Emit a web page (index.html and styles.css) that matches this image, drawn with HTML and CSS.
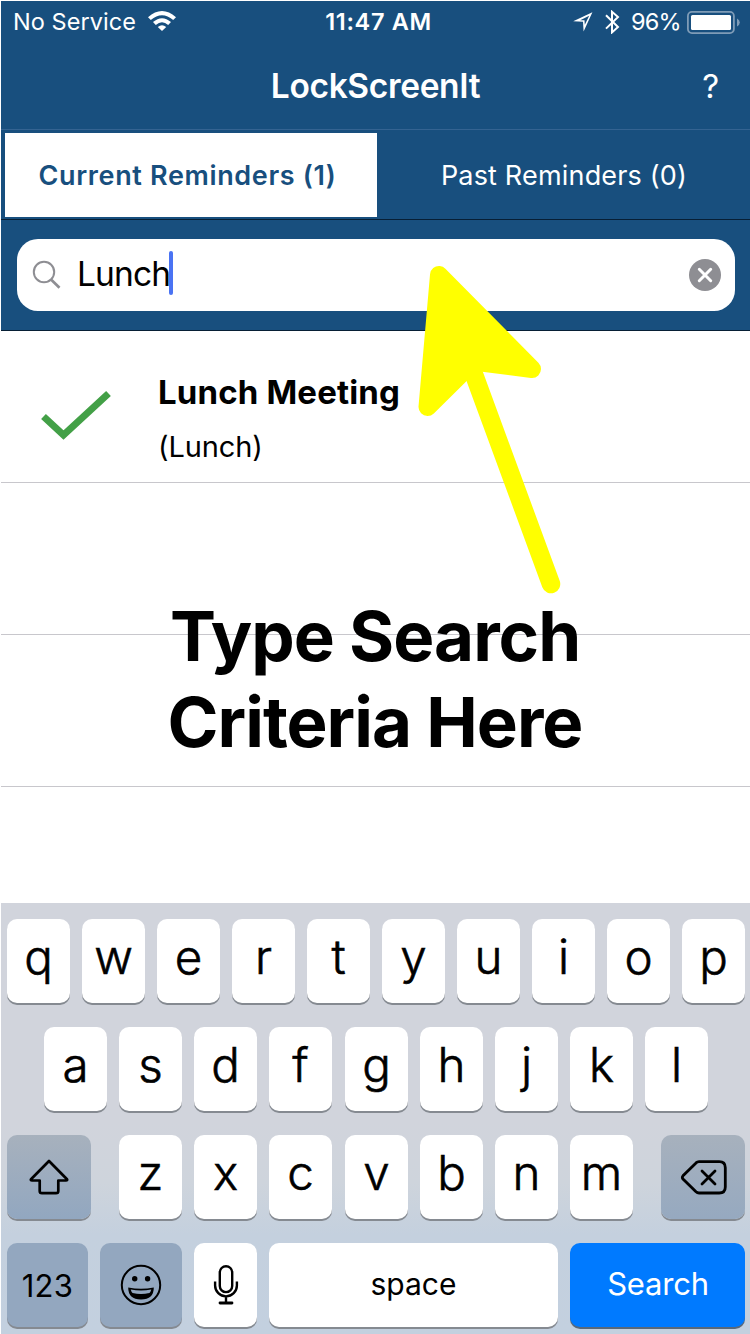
FILE: index.html
```html
<!DOCTYPE html>
<html lang="en">
<head>
<meta charset="utf-8">
<title>LockScreenIt</title>
<link rel="stylesheet" href="styles.css">
</head>
<body>
<main class="screen">
  <header class="header">
    <div class="status">
      <div class="status-left">
        <span class="carrier">No Service</span>
        <svg class="wifi" width="28" height="20" viewBox="0 0 28 20"><path d="M0 6.2Q14-6.2 28 6.2L25.2 9Q14-.6 2.8 9ZM5 11.1Q14 3.2 23 11.1L20.2 13.9Q14 8.7 7.8 13.9ZM9.8 15.9Q14 12.4 18.2 15.9L14 20Z" fill="#fff"/></svg>
      </div>
      <span class="clock">11:47 AM</span>
      <div class="status-right">
        <svg class="locate" width="20" height="20" viewBox="0 0 20 20"><path fill-rule="evenodd" d="M.2 9.2 19.4.3 10.6 19.5 10 9.7ZM7.2 8.2H11.5L11.8 12.8 16.2 3.7Z" fill="#fff"/></svg>
        <svg class="bluetooth" width="15" height="24" viewBox="0 0 15 24"><path d="M1 5.2 13 17 7 22.4V1.8L13 7 1 18.6" fill="none" stroke="#fff" stroke-width="2"/></svg>
        <span class="percent">96%</span>
        <svg class="battery" width="53" height="23" viewBox="0 0 53 23"><rect x=".9" y=".9" width="46" height="21.2" rx="4" fill="none" stroke="#7f9cb7" stroke-width="1.8"/><rect x="4" y="4" width="40" height="15" rx="1.5" fill="#fff"/><path d="M50 7.5Q52.8 9 52.8 11.5T50 15.5Z" fill="#7f9cb7"/></svg>
      </div>
    </div>
    <nav class="nav"><h1 class="title">LockScreenIt</h1><span class="help">?</span></nav>
    <div class="tabs">
      <div class="tab active"><span class="tab-current">Current Reminders (1)</span></div>
      <div class="tab"><span class="tab-past">Past Reminders (0)</span></div>
    </div>
    <div class="search-bar">
      <div class="field">
        <svg class="lens" width="30" height="30" viewBox="0 0 30 30" fill="none" stroke="#8e8e93"><circle cx="12" cy="12" r="10.2" stroke-width="2"/><path d="m19 19.5 8.5 8.3" stroke-width="2.7"/></svg>
        <span class="query">Lunch</span><i class="caret"></i>
        <svg class="clear" width="32" height="32" viewBox="0 0 32 32"><circle cx="16" cy="16" r="16" fill="#8e8e93"/><path d="m10.3 10.3 11.4 11.4m0-11.4L10.3 21.7" stroke="#fff" stroke-width="3" stroke-linecap="round"/></svg>
      </div>
    </div>
  </header>
  <section class="list">
    <div class="row">
      <svg class="check" width="70" height="50" viewBox="0 0 70 50"><path d="M2.5 26.5 22.5 45 67.5 3.5" fill="none" stroke="#43a047" stroke-width="7"/></svg>
      <div class="reminder"><strong class="name">Lunch Meeting</strong><span class="note">(Lunch)</span></div>
    </div>
    <div class="row"></div>
    <div class="row"></div>
  </section>
  <section class="keyboard">
    <div class="keys row-one"><b>q</b><b>w</b><b>e</b><b>r</b><b>t</b><b>y</b><b>u</b><b>i</b><b>o</b><b>p</b></div>
    <div class="keys row-two"><b>a</b><b>s</b><b>d</b><b>f</b><b class="mid">g</b><b>h</b><b>j</b><b>k</b><b>l</b></div>
    <div class="keys row-three">
      <b class="dim shift"><svg width="40" height="36" viewBox="0 0 40 36"><path d="M20 2 38 20.3Q38.7 21.5 37 21.5H29.3V32Q29.3 34.2 27 34.2H13Q10.7 34.2 10.7 32V21.5H3Q1.3 21.5 2 20.3Z" fill="none" stroke="#000" stroke-width="2.7" stroke-linejoin="round"/></svg></b>
      <b>z</b><b>x</b><b>c</b><b class="mid">v</b><b>b</b><b>n</b><b>m</b>
      <b class="dim delete"><svg width="47" height="35" viewBox="0 0 47 35" fill="none" stroke="#000" stroke-width="2.8"><path d="M19 1.7H39.2Q45.3 1.7 45.3 7.7V27Q45.3 33 39.2 33H19Q17.3 33 16 31.8L3 19Q1.7 17.4 3 15.8L16 2.9Q17.3 1.7 19 1.7Z"/><path d="m22 11 13 13m0-13L22 24" stroke-linecap="round"/></svg></b>
    </div>
    <div class="keys row-four">
      <b class="dim numbers">123</b>
      <b class="dim emoji"><svg width="42" height="42" viewBox="0 0 42 42"><circle cx="21" cy="21" r="19.2" fill="none" stroke="#000" stroke-width="2"/><circle cx="14.7" cy="14.8" r="2.7"/><circle cx="27.6" cy="14.8" r="2.7"/><path d="M8.2 23.5Q21 26 33.8 23.5 33.8 35.5 21 35.5T8.2 23.5Z"/><path d="M10.7 25.6Q21 27.6 31.3 25.6 30.7 28 29.4 29 21 31 12.6 29 11.3 28 10.7 25.6Z" fill="#93a7bf"/></svg></b>
      <b class="mic"><svg width="26" height="40" viewBox="0 0 26 40" fill="none" stroke="#000" stroke-width="2.4"><rect x="6.8" y="1.2" width="12.4" height="25.9" rx="6.2"/><path d="M2.1 16.5V20.5A10.9 10.9 0 0 0 23.9 20.5V16.5M13 31.5V38"/><path d="M7 38h12" stroke-width="2.8" stroke-linecap="round"/></svg></b>
      <b class="space"><span class="space-label">space</span></b><b class="go"><span class="go-label">Search</span></b>
    </div>
  </section>
  <div class="hint">Type Search<br><span class="hint-second">Criteria Here</span></div>
  <svg class="pointer" width="150" height="332" viewBox="415 263 150 332" fill="#ff0" stroke="#ff0" stroke-linecap="round" stroke-linejoin="round"><path d="M439 275 532 369 473.5 361.5 427.5 407Z" stroke-width="18"/><path d="M465 350 551 584" stroke-width="18.5"/></svg>
</main>
</body>
</html>
```
FILE: styles.css
```css
* { box-sizing: border-box; }
body { margin: 0; background: #fff; font-family: Inter, "Liberation Sans", sans-serif; }
svg { display: block; flex: none; }
.screen { position: relative; width: 750px; height: 1334px; padding: 1px 0 0 1px; overflow: hidden; color: #000; }
.header { height: 330px; background: #184f7e; color: #fff; border-bottom: 1px solid #071f35; }
.status { display: grid; grid-template-columns: 1fr auto 1fr; height: 42px; padding: 0 10px 0 12px; align-items: center; font-size: 23.5px; line-height: 42px; }
.status-left, .status-right { display: flex; align-items: center; }
.status-right { justify-content: flex-end; }
.wifi { margin-left: 12px; margin-bottom: 2px; }
.carrier { letter-spacing: .05px; }
.clock { font-weight: 600; letter-spacing: .65px; padding-left: 4px; }
.bluetooth { margin: 0 11px 0 12px; }
.percent { letter-spacing: -.7px; margin-right: 6px; }
.nav { display: grid; grid-template-columns: 1fr auto 1fr; height: 87px; padding: 0 31px 1px; align-items: center; border-bottom: 1px solid #346391; }
.title { grid-column: 2; margin: 0; font-size: 33.5px; line-height: 40px; font-weight: 600; letter-spacing: -.35px; }
.help { justify-self: end; font-size: 33px; line-height: 40px; }
.tabs { display: flex; height: 90px; padding: 3px 1px 2px 4px; border-bottom: 1px solid #071f35; }
.tab { flex: 0 0 372px; display: flex; align-items: center; justify-content: center; padding-left: 2px; padding-top: 1px; font-size: 27px; line-height: 83px; white-space: nowrap; letter-spacing: .18px; }
.active { padding: 1px 7px 0 0; background: #fff; color: #184f7e; font-weight: 600; letter-spacing: .64px; }
.search-bar { height: 110px; padding: 19px 15px 19px 16px; }
.field { display: flex; align-items: center; height: 72px; padding: 0 14px 0 15px; background: #fff; border-radius: 21px; color: #000; }
.query { margin-left: 15px; margin-bottom: 3px; font-size: 33.5px; line-height: 68px; letter-spacing: -.85px; }
.caret { width: 4px; height: 44px; margin-left: -1px; margin-bottom: 4px; border-radius: 2px; background: #4a73f3; }
.clear { margin-left: auto; }
.list { height: 572px; }
.row { display: flex; height: 152px; border-bottom: 1px solid #c8c7cc; }
.check { margin: 59px 47px 0 40px; }
.reminder { display: flex; flex-direction: column; padding-top: 41px; }
.name { font-size: 33px; line-height: 40px; font-weight: 700; letter-spacing: .15px; }
.note { margin-top: 17px; font-size: 29px; line-height: 36px; letter-spacing: -.1px; }
.keyboard { display: flex; flex-direction: column; gap: 24px; height: 431px; padding: 16px 5px 0 6px; background: linear-gradient(#d1d4dc 0 51%, #ced4dc 65%, #c4d0de 77%, #c3d0df); }
.keys { display: flex; gap: 12px; height: 84px; }
.keys b { display: flex; align-items: center; justify-content: center; flex: none; width: 63px; height: 84px; padding-bottom: 8px; border-radius: 10px; background: #fff; box-shadow: 0 2px 0 #858a91; font-size: 47.5px; line-height: 60px; font-weight: 300; -webkit-text-stroke: .6px #000; }
.row-two { padding-left: 37px; }
.keys .mid { margin-left: 1px; }
.keys .dim { background: #93a7bf; padding: 0; }
.keys .shift { width: 84px; margin-right: 16px; background: linear-gradient(#a7b1bd, #92a7c0); }
.keys .delete { width: 84px; margin-left: 16px; background: linear-gradient(#a7b1bd, #96a9c0); }
.keys .numbers, .keys .space, .keys .go { -webkit-text-stroke: 0; font-weight: 400; }
.keys .numbers { width: 81px; font-size: 31px; padding-top: 1px; letter-spacing: .3px; }
.keys .emoji { width: 82px; }
.keys .mic { padding: 0; }
.keys .space { width: 289px; font-size: 30px; padding-bottom: 3px; }
.keys .go { width: 175px; background: #007aff; color: #fff; font-size: 31px; padding: 0 0 3px 1px; letter-spacing: -.2px; box-shadow: 0 2px 0 #59697b; }
.hint { position: absolute; top: 593px; left: 0; width: 750px; text-align: center; font-size: 69px; line-height: 86px; font-weight: 700; letter-spacing: -1px; }
.pointer { position: absolute; left: 415px; top: 263px; }
```
